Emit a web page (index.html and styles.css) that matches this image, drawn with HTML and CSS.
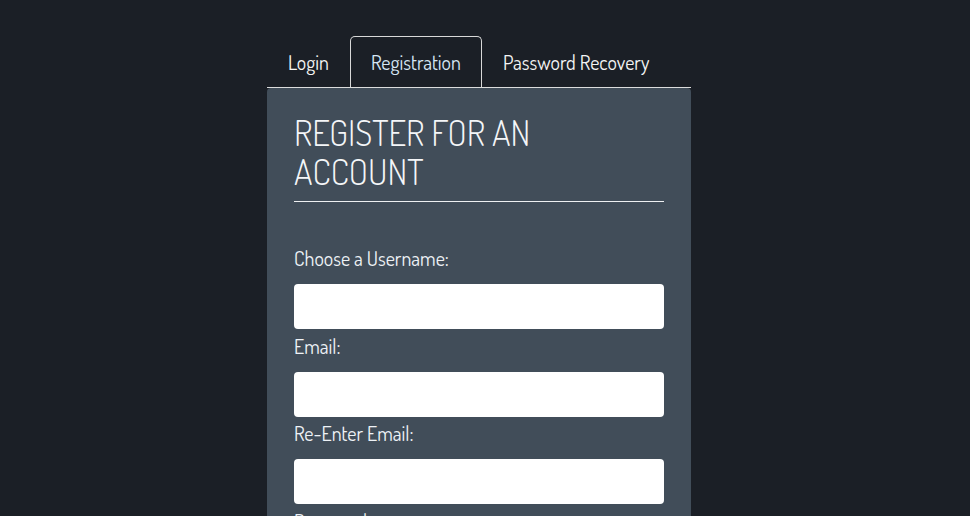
FILE: index.html
```html
<!DOCTYPE html>
<html lang="en">
<head>
<meta charset="utf-8">
<title>Register</title>
<link rel="stylesheet" href="styles.css">
</head>
<body>
<div class="wrap">
  <ul class="tabs">
    <li class="tab">Login</li>
    <li class="tab active">Registration</li>
    <li class="tab">Password Recovery</li>
  </ul>
  <div class="panel">
    <h1 class="title">REGISTER FOR AN ACCOUNT</h1>
    <form class="form">
      <label class="label" for="u">Choose a Username:</label>
      <input class="field" id="u" type="text">
      <label class="label" for="e">Email:</label>
      <input class="field" id="e" type="text">
      <label class="label" for="e2">Re-Enter Email:</label>
      <input class="field" id="e2" type="text">
      <label class="label" for="p">Password:</label>
      <input class="field" id="p" type="password">
    </form>
  </div>
</div>
</body>
</html>
```
FILE: styles.css
```css
html, body {
  margin: 0;
  padding: 0;
  background: #1b1f26;
  height: 100%;
  overflow: hidden;
}
body {
  font-family: Dosis, "Roboto Condensed", Roboto, sans-serif;
  font-size: 20px;
  color: #f2f2f2;
}
.wrap {
  width: 424px;
  margin-left: 267px;
  padding-top: 36px;
}
.tabs {
  list-style: none;
  margin: 0;
  padding: 0;
  display: flex;
  border-bottom: 1px solid #dcdcdc;
}
.tab {
  padding: 10px 20px;
  line-height: 30px;
  border: 1px solid transparent;
  border-bottom: 0;
  border-radius: 5px 5px 0 0;
  color: #f4f4f4;
}
.tab.active {
  border-color: #d8d8d8;
  color: #d6e6f4;
}
.panel {
  background: #414d59;
  border-radius: 4px 4px 0 0;
  padding: 25px 27px 27px;
  min-height: 500px;
}
.title {
  margin: 0 0 42px;
  padding-bottom: 10px;
  border-bottom: 1px solid #eef0f2;
  font-size: 35px;
  font-weight: 300;
  line-height: 39px;
  color: #f4f6f8;
}
.form {
  display: flex;
  flex-direction: column;
}
.label {
  line-height: 28px;
  margin-bottom: 12px;
  color: #eef2f6;
}
.field {
  height: 45px;
  box-sizing: border-box;
  border: 0;
  border-radius: 4px;
  background: #fff;
  margin: 0 0 2.5px;
  padding: 0 12px;
  font: inherit;
}
```
